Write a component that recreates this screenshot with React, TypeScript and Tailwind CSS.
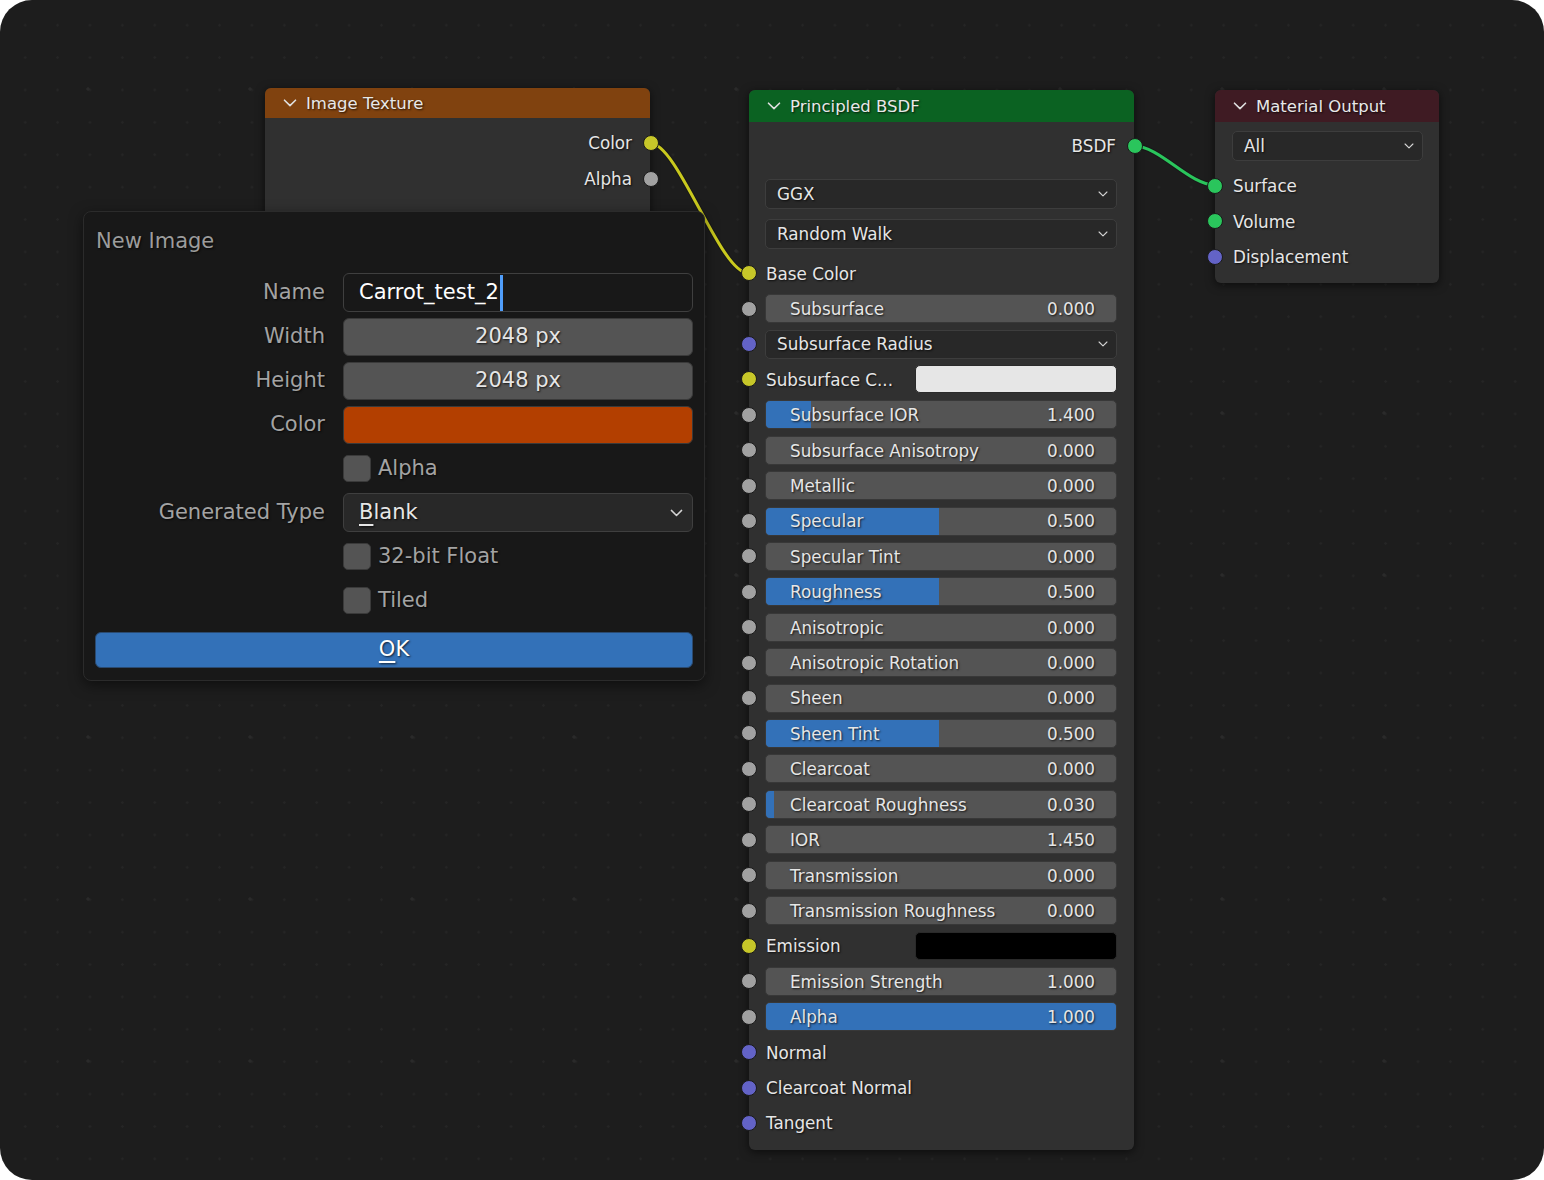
import type { ReactNode } from 'react';

type Sock = 'color' | 'float' | 'vector' | 'shader';

const sockBg: Record<Sock, string> = {
  color: 'bg-[#c7c729]',
  float: 'bg-[#a1a1a1]',
  vector: 'bg-[#6363c7]',
  shader: 'bg-[#2ac55c]',
};

const shadowText = '[text-shadow:1px_1px_2px_rgba(0,0,0,0.75)]';
const nodeText = 'translate-y-[1px] [text-shadow:1px_1px_2px_rgba(0,0,0,0.75)]';

function Socket({ type, side = 'left' }: { type: Sock; side?: 'left' | 'right' }) {
  return (
    <span
      className={`absolute top-1/2 h-[16px] w-[16px] -translate-y-1/2 rounded-full border-[1.5px] border-[#1a1a1a] ${sockBg[type]} ${
        side === 'left' ? 'left-[-8.5px]' : 'right-[-8.5px]'
      }`}
    />
  );
}

function Chevron({ className }: { className?: string }) {
  return (
    <svg
      viewBox="0 0 14 8"
      fill="none"
      stroke="currentColor"
      strokeWidth={1.6}
      strokeLinecap="round"
      strokeLinejoin="round"
      className={className}
    >
      <path d="M1.5 1.2 7 6.6 12.5 1.2" />
    </svg>
  );
}

function NodeHeader({ title, bg, h }: { title: string; bg: string; h: string }) {
  return (
    <div className={`flex items-center gap-[9px] rounded-t-[6px] pl-[18px] text-[16.5px] text-[#e8e8e8] ${bg} ${h}`}>
      <Chevron className="h-[8px] w-[14px] text-[#e0e0e0]" />
      <span className={`translate-y-[1px] ${shadowText}`}>{title}</span>
    </div>
  );
}

function NodeDropdown({ label }: { label: string }) {
  return (
    <div className="flex h-full w-full items-center justify-between rounded-[5px] border border-[#3d3d3d] bg-[#282828] pl-[11px] pr-[8px] text-[#e6e6e6]">
      <span className={nodeText}>{label}</span>
      <Chevron className="h-[6px] w-[10px] text-[#d4d4d4]" />
    </div>
  );
}

function Slider({ label, value, fill }: { label: string; value: string; fill: number }) {
  return (
    <div className="relative flex h-[29px] w-full items-center justify-between overflow-hidden rounded-[5px] border border-[#383838] bg-[#545454] pl-[24px] pr-[21px] text-[#e6e6e6]">
      {fill > 0 && (
        <div className="absolute inset-y-0 left-0 bg-[#3371b8]" style={{ width: `${fill * 100}%` }} />
      )}
      <span className={`relative ${nodeText}`}>{label}</span>
      <span className={`relative ${nodeText}`}>{value}</span>
    </div>
  );
}

type Row =
  | { kind: 'label'; label: string; sock: Sock }
  | { kind: 'slider'; label: string; sock: Sock; value: string; fill: number }
  | { kind: 'dropdown'; label: string; sock: Sock }
  | { kind: 'color'; label: string; sock: Sock; swatch: string };

const bsdfRows: Row[] = [
  { kind: 'label', label: 'Base Color', sock: 'color' },
  { kind: 'slider', label: 'Subsurface', sock: 'float', value: '0.000', fill: 0 },
  { kind: 'dropdown', label: 'Subsurface Radius', sock: 'vector' },
  { kind: 'color', label: 'Subsurface C...', sock: 'color', swatch: 'bg-[#e6e6e6]' },
  { kind: 'slider', label: 'Subsurface IOR', sock: 'float', value: '1.400', fill: 0.129 },
  { kind: 'slider', label: 'Subsurface Anisotropy', sock: 'float', value: '0.000', fill: 0 },
  { kind: 'slider', label: 'Metallic', sock: 'float', value: '0.000', fill: 0 },
  { kind: 'slider', label: 'Specular', sock: 'float', value: '0.500', fill: 0.494 },
  { kind: 'slider', label: 'Specular Tint', sock: 'float', value: '0.000', fill: 0 },
  { kind: 'slider', label: 'Roughness', sock: 'float', value: '0.500', fill: 0.494 },
  { kind: 'slider', label: 'Anisotropic', sock: 'float', value: '0.000', fill: 0 },
  { kind: 'slider', label: 'Anisotropic Rotation', sock: 'float', value: '0.000', fill: 0 },
  { kind: 'slider', label: 'Sheen', sock: 'float', value: '0.000', fill: 0 },
  { kind: 'slider', label: 'Sheen Tint', sock: 'float', value: '0.500', fill: 0.494 },
  { kind: 'slider', label: 'Clearcoat', sock: 'float', value: '0.000', fill: 0 },
  { kind: 'slider', label: 'Clearcoat Roughness', sock: 'float', value: '0.030', fill: 0.024 },
  { kind: 'slider', label: 'IOR', sock: 'float', value: '1.450', fill: 0 },
  { kind: 'slider', label: 'Transmission', sock: 'float', value: '0.000', fill: 0 },
  { kind: 'slider', label: 'Transmission Roughness', sock: 'float', value: '0.000', fill: 0 },
  { kind: 'color', label: 'Emission', sock: 'color', swatch: 'bg-black' },
  { kind: 'slider', label: 'Emission Strength', sock: 'float', value: '1.000', fill: 0 },
  { kind: 'slider', label: 'Alpha', sock: 'float', value: '1.000', fill: 1 },
  { kind: 'label', label: 'Normal', sock: 'vector' },
  { kind: 'label', label: 'Clearcoat Normal', sock: 'vector' },
  { kind: 'label', label: 'Tangent', sock: 'vector' },
];

function BsdfRow({ row }: { row: Row }) {
  let body: ReactNode;
  if (row.kind === 'slider') body = <Slider label={row.label} value={row.value} fill={row.fill} />;
  else if (row.kind === 'dropdown')
    body = (
      <div className="h-[29px] w-full">
        <NodeDropdown label={row.label} />
      </div>
    );
  else if (row.kind === 'color')
    body = (
      <div className="flex w-full items-center justify-between">
        <span className={`pl-px ${nodeText}`}>{row.label}</span>
        <span className={`h-[28px] w-[202px] rounded-[5px] border border-[#2a2a2a] ${row.swatch}`} />
      </div>
    );
  else body = <span className={`pl-px ${nodeText}`}>{row.label}</span>;

  return (
    <div className="relative flex h-[35.42px] items-center pl-[16px] pr-[17px]">
      <Socket type={row.sock} />
      {body}
    </div>
  );
}

function Checkbox({ label }: { label: string }) {
  return (
    <div className="flex items-center gap-[7px]">
      <span className="h-[27px] w-[28px] rounded-[5px] border border-[#3a3a3a] bg-[#545454]" />
      <span className={`text-[#a3a3a3] ${shadowText}`}>{label}</span>
    </div>
  );
}

function FormRow({ label, children }: { label?: string; children: ReactNode }) {
  return (
    <div className="grid h-[44px] grid-cols-[230px_350px] items-center gap-x-[18px]">
      <span className={`text-right text-[#a3a3a3] ${shadowText}`}>{label}</span>
      {children}
    </div>
  );
}

export default function App() {
  return (
    <div className="min-h-screen bg-white font-['DejaVu_Sans','Liberation_Sans',sans-serif]">
      <div className="relative h-[1180px] w-[1544px] overflow-hidden rounded-[32px] bg-[#1d1d1d] [background-image:radial-gradient(circle,#2a2a2a_1.4px,transparent_1.9px),radial-gradient(circle,#252525_1px,transparent_1.5px)] [background-position:7px_8px,9px_9px] [background-size:162px_162px,32.4px_32.4px]">
        {/* links */}
        <svg className="absolute inset-0 h-full w-full" viewBox="0 0 1544 1180" fill="none">
          <path d="M650 143 C678 143 720 273 748 273" stroke="#111" strokeOpacity={0.5} strokeWidth={5} />
          <path d="M650 143 C678 143 720 273 748 273" stroke="#c9c91e" strokeWidth={3} />
          <path d="M1134 146 C1160 146 1189 185 1215 185" stroke="#111" strokeOpacity={0.5} strokeWidth={5} />
          <path d="M1134 146 C1160 146 1189 185 1215 185" stroke="#2ac55c" strokeWidth={3} />
        </svg>

        {/* Image Texture */}
        <div className="absolute left-[265px] top-[88px] w-[385px] rounded-[6px] bg-[#303030] text-[16.8px] text-[#e6e6e6] shadow-[0_2px_10px_rgba(0,0,0,0.6)]">
          <NodeHeader title="Image Texture" bg="bg-[#80420f]" h="h-[30px]" />
          <div className="h-[300px] pt-[7px]">
            <div className="relative flex h-[36px] items-center justify-end pr-[18px]">
              <span className={nodeText}>Color</span>
              <Socket type="color" side="right" />
            </div>
            <div className="relative flex h-[36px] items-center justify-end pr-[18px]">
              <span className={nodeText}>Alpha</span>
              <Socket type="float" side="right" />
            </div>
          </div>
        </div>

        {/* Principled BSDF */}
        <div className="absolute left-[749px] top-[90px] w-[385px] rounded-[6px] bg-[#303030] text-[16.8px] text-[#e6e6e6] shadow-[0_2px_10px_rgba(0,0,0,0.6)]">
          <NodeHeader title="Principled BSDF" bg="bg-[#0b6222]" h="h-[32px]" />
          <div className="pb-[9px] pt-[6px]">
            <div className="relative flex h-[36px] items-center justify-end pr-[18px]">
              <span className={nodeText}>BSDF</span>
              <Socket type="shader" side="right" />
            </div>
            <div className="mt-[15px] flex flex-col gap-[10px] pl-[16px] pr-[17px]">
              <div className="h-[30px]">
                <NodeDropdown label="GGX" />
              </div>
              <div className="h-[30px]">
                <NodeDropdown label="Random Walk" />
              </div>
            </div>
            <div className="mt-[6.5px]">
              {bsdfRows.map((r) => (
                <BsdfRow key={r.label} row={r} />
              ))}
            </div>
          </div>
        </div>

        {/* Material Output */}
        <div className="absolute left-[1215px] top-[90px] w-[224px] rounded-[6px] bg-[#303030] text-[16.8px] text-[#e6e6e6] shadow-[0_2px_10px_rgba(0,0,0,0.6)]">
          <NodeHeader title="Material Output" bg="bg-[#3f1b23]" h="h-[32px]" />
          <div className="pb-[8.5px] pt-[9px]">
            <div className="h-[30px] pl-[17px] pr-[16px]">
              <NodeDropdown label="All" />
            </div>
            <div className="mt-[7px]">
              {(
                [
                  ['Surface', 'shader'],
                  ['Volume', 'shader'],
                  ['Displacement', 'vector'],
                ] as [string, Sock][]
              ).map(([label, s]) => (
                <div key={label} className="relative flex h-[35.5px] items-center pl-[18px]">
                  <Socket type={s} />
                  <span className={nodeText}>{label}</span>
                </div>
              ))}
            </div>
          </div>
        </div>

        {/* New Image dialog */}
        <div className="absolute left-[83px] top-[211px] flex h-[470px] w-[622px] flex-col rounded-[8px] border border-[#2b2b2b] bg-[#181818] px-[11px] pb-[12px] pt-[16px] text-[21px] shadow-[0_4px_14px_rgba(0,0,0,0.5)]">
          <div className={`flex h-[28px] items-center pl-px text-[#9c9c9c] ${shadowText}`}>New Image</div>
          <div className="mt-[14.5px]">
            <FormRow label="Name">
              <div className="flex h-[39px] items-center rounded-[6px] border border-[#3f3f3f] bg-[#181818] pl-[15px] text-white">
                <span>Carrot_test_2</span>
                <span className="ml-px h-[36px] w-[3px] bg-[#4f9dfa]" />
              </div>
            </FormRow>
            <FormRow label="Width">
              <div className={`flex h-[38px] items-center justify-center rounded-[6px] border border-[#3a3a3a] bg-[#545454] text-[#e6e6e6] ${shadowText}`}>
                2048 px
              </div>
            </FormRow>
            <FormRow label="Height">
              <div className={`flex h-[38px] items-center justify-center rounded-[6px] border border-[#3a3a3a] bg-[#545454] text-[#e6e6e6] ${shadowText}`}>
                2048 px
              </div>
            </FormRow>
            <FormRow label="Color">
              <div className="h-[38px] rounded-[6px] border border-[#3a3a3a] bg-[#b33f00]" />
            </FormRow>
            <FormRow>
              <Checkbox label="Alpha" />
            </FormRow>
            <FormRow label="Generated Type">
              <div className="flex h-[39px] items-center justify-between rounded-[6px] border border-[#3f3f3f] bg-[#282828] pl-[15px] pr-[9px] text-[#e6e6e6]">
                <span className={shadowText}>
                  <span className="underline decoration-[1.5px] underline-offset-[5px]">B</span>lank
                </span>
                <Chevron className="h-[8px] w-[13px] text-[#d4d4d4]" />
              </div>
            </FormRow>
            <FormRow>
              <Checkbox label="32-bit Float" />
            </FormRow>
            <FormRow>
              <Checkbox label="Tiled" />
            </FormRow>
          </div>
          <button
            type="button"
            className={`mt-[9.5px] flex h-[38px] w-full items-center justify-center rounded-[6px] border border-[#2a4a70] bg-[#3371b8] text-white ${shadowText}`}
          >
            <span>
              <span className="underline decoration-[1.5px] underline-offset-[5px]">O</span>K
            </span>
          </button>
        </div>
      </div>
    </div>
  );
}
